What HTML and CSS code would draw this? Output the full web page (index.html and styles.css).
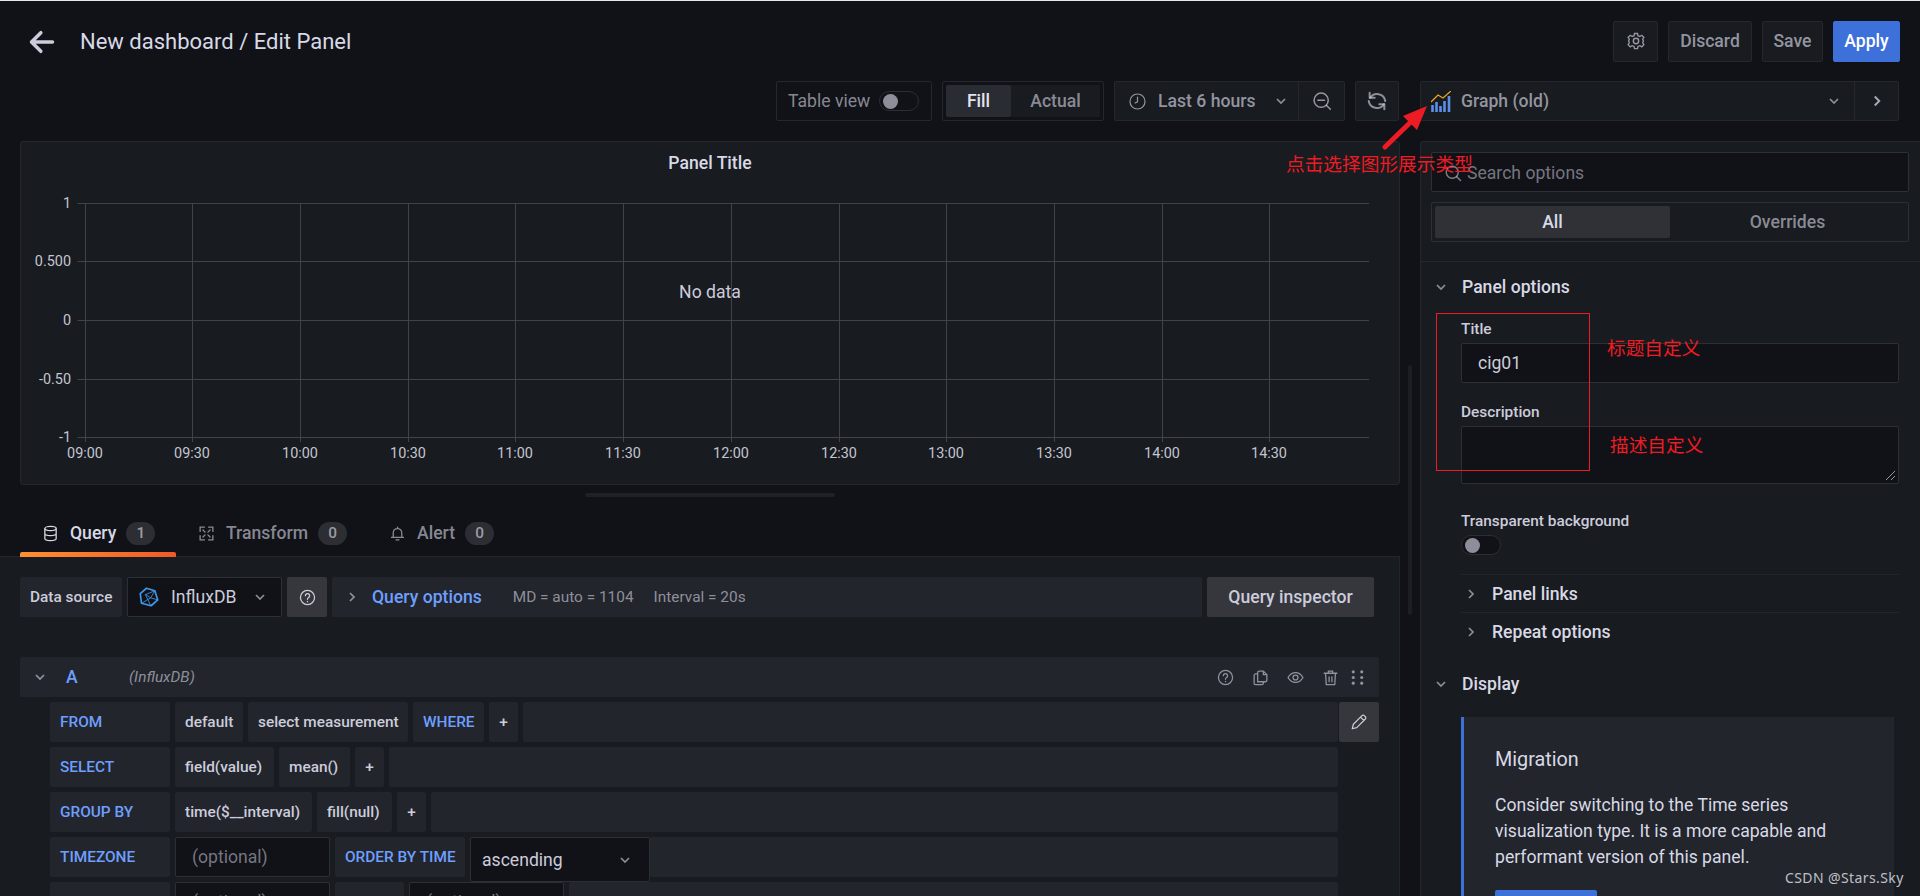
FILE: index.html
```html
<!DOCTYPE html>
<html lang="en">
<head>
<meta charset="utf-8">
<title>Edit Panel</title>
<link rel="stylesheet" href="styles.css">
</head>
<body>
<header class="topbar">
  <svg class="back" viewBox="0 0 24 24"><path d="M21 12H4M11 4l-8 8 8 8" fill="none" stroke="currentColor" stroke-width="3" stroke-linecap="round" stroke-linejoin="round"/></svg>
  <h1 class="crumb">New dashboard / Edit Panel</h1>
  <div class="top-actions">
    <button class="btn icon-btn"><svg class="ic16" viewBox="0 0 24 24"><circle cx="12" cy="12" r="3.2"/><path d="M10 2h4l.6 3 2.5 1 2.6-1.6 2.8 2.8L20.900 9.800l1 2.200 0 .1-1 2.300 1.600 2.600-2.800 2.800-2.600-1.600-2.500 1-.6 3h-4l-.6-3-2.500-1-2.600 1.600-2.800-2.800L3.100 14.300l-1-2.300 1-2.200L1.500 7.200l2.800-2.800 2.600 1.600 2.500-1z" transform="translate(1.200 1.200) scale(.9)"/></svg></button>
    <button class="btn discard">Discard</button>
    <button class="btn save">Save</button>
    <button class="btn apply">Apply</button>
  </div>
</header>

<div class="workspace">
  <main class="left">
    <div class="toolbar">
      <div class="tool-box table-view"><span>Table view</span><span class="switch small"><i></i></span></div>
      <div class="tool-box fill-group"><span class="seg on">Fill</span><span class="seg">Actual</span></div>
      <div class="time-group">
        <div class="time-main">
          <svg class="ic16" viewBox="0 0 24 24"><circle cx="12" cy="12" r="9.500"/><path d="M12 6.500v6l-3 1.500" stroke-linecap="round"/></svg>
          <span class="time-label">Last 6 hours</span>
          <svg class="chev" viewBox="0 0 12 12"><path d="M3 4.500l3 3 3-3"/></svg>
        </div>
        <div class="time-zoom"><svg class="ic18" viewBox="0 0 24 24"><circle cx="11" cy="11" r="8.500"/><path d="M7 11h8M17.200 17.200L22 22" stroke-linecap="round"/></svg></div>
      </div>
      <div class="refresh"><svg class="ic18" viewBox="0 0 24 24"><path d="M4.500 8.500A9 9 0 0 1 21 12M19.500 15.500A9 9 0 0 1 3 12" stroke-linecap="round"/><path d="M4 3v5.500h5.500M20 21v-5.500h-5.500" stroke-linecap="round" stroke-linejoin="round"/></svg></div>
    </div>

    <section class="panel">
      <h2 class="panel-title">Panel Title</h2>
      <svg class="chart" viewBox="0 0 1380 300" width="1380" height="300">
        <g class="grid">
          <path d="M56.500 39.500H1348M56.500 97.500H1348M56.500 156.500H1348M56.500 215.500H1348M56.500 273.500H1348"/>
          <path d="M64.500 39V278M171.500 39V278M279.500 39V278M387.500 39V278M494.500 39V278M602.500 39V278M710.500 39V278M818.500 39V278M925.500 39V278M1033.500 39V278M1141.500 39V278M1248.500 39V278"/>
        </g>
        <g class="y-labels">
          <text x="50" y="44">1</text><text x="50" y="102">0.500</text><text x="50" y="161">0</text><text x="50" y="220">-0.50</text><text x="50" y="278">-1</text>
        </g>
        <g class="x-labels">
          <text x="64" y="294">09:00</text><text x="171" y="294">09:30</text><text x="279" y="294">10:00</text><text x="387" y="294">10:30</text><text x="494" y="294">11:00</text><text x="602" y="294">11:30</text><text x="710" y="294">12:00</text><text x="818" y="294">12:30</text><text x="925" y="294">13:00</text><text x="1033" y="294">13:30</text><text x="1141" y="294">14:00</text><text x="1248" y="294">14:30</text>
        </g>
      </svg>
      <div class="no-data">No data</div>
    </section>
    <div class="splitter"><i></i></div>

    <nav class="tabs">
      <a class="tab active"><svg class="ic16" viewBox="0 0 24 24"><ellipse cx="12" cy="5" rx="8" ry="3"/><path d="M4 5v14c0 1.700 3.600 3 8 3s8-1.300 8-3V5M4 12c0 1.700 3.600 3 8 3s8-1.300 8-3"/></svg><span>Query</span><b class="badge">1</b></a>
      <a class="tab"><svg class="ic16" viewBox="0 0 24 24"><path d="M3 9V3h6M21 9V3h-6M3 15v6h6M21 15v6h-6M7 7l3 3M17 7l-3 3M7 17l3-3M17 17l-3-3" stroke-linecap="round"/></svg><span>Transform</span><b class="badge">0</b></a>
      <a class="tab"><svg class="ic16" viewBox="0 0 24 24"><path d="M6 17V11a6 6 0 0 1 12 0v6M3.500 17.500h17M10 21h4M12 3v2" stroke-linecap="round"/></svg><span>Alert</span><b class="badge">0</b></a>
    </nav>

    <section class="query-pane">
      <div class="ds-row">
        <span class="cell ds-label">Data source</span>
        <div class="ds-select">
          <svg class="influx" viewBox="0 0 24 24"><path class="in-out" d="M9 1.500l10 3 3.500 11-8 7-11.500-3L1.500 8z"/><path class="in-in" d="M8.500 9l-1 0 6.500 13M8 9l11-4.500M14 13l5-8.500M14 13l-11 6.500M8 9l6 4 8.500 2.500"/></svg>
          <span>InfluxDB</span>
          <svg class="chev" viewBox="0 0 12 12"><path d="M3 4.500l3 3 3-3"/></svg>
        </div>
        <div class="ds-help"><svg class="ic16" viewBox="0 0 24 24"><circle cx="12" cy="12" r="10"/><path d="M9 9.500a3 3 0 1 1 4.500 2.600c-1 .6-1.500 1.200-1.500 2.400M12 17.500v.5" stroke-linecap="round"/></svg></div>
        <div class="q-options">
          <svg class="chev side" viewBox="0 0 12 12"><path d="M4.500 3l3 3-3 3"/></svg>
          <span class="q-link">Query options</span>
          <span class="q-meta">MD = auto = 1104</span>
          <span class="q-meta">Interval = 20s</span>
        </div>
        <button class="inspector">Query inspector</button>
      </div>

      <div class="q-head">
        <svg class="chev" viewBox="0 0 12 12"><path d="M3 4.500l3 3 3-3"/></svg>
        <span class="q-letter">A</span>
        <span class="q-ds">(InfluxDB)</span>
        <div class="q-icons">
          <svg class="ic16" viewBox="0 0 24 24"><circle cx="12" cy="12" r="10"/><path d="M9 9.500a3 3 0 1 1 4.500 2.600c-1 .6-1.500 1.200-1.500 2.400M12 17.500v.5" stroke-linecap="round"/></svg>
          <svg class="ic16" viewBox="0 0 24 24"><path d="M8 18V5a2 2 0 0 1 2-2h6l5 5v8a2 2 0 0 1-2 2zM16 3v5h5M8 7H5a2 2 0 0 0-2 2v11a2 2 0 0 0 2 2h9a2 2 0 0 0 2-2v-2"/></svg>
          <svg class="ic16" viewBox="0 0 24 24"><path d="M1.500 12C4 7.500 7.700 5 12 5s8 2.500 10.500 7C20 16.500 16.300 19 12 19s-8-2.500-10.500-7z"/><circle cx="12" cy="12" r="3.500"/></svg>
          <svg class="ic16" viewBox="0 0 24 24"><path d="M3 6h18M9 6V3h6v3M5 6l1 16h12l1-16M10 11v7M14 11v7" stroke-linecap="round"/></svg>
          <svg class="ic16 filled" viewBox="0 0 24 24"><circle cx="6" cy="4" r="2.200"/><circle cx="18" cy="4" r="2.200"/><circle cx="6" cy="12" r="2.200"/><circle cx="18" cy="12" r="2.200"/><circle cx="6" cy="20" r="2.200"/><circle cx="18" cy="20" r="2.200"/></svg>
        </div>
      </div>

      <div class="q-rows">
        <div class="q-row">
          <span class="cell kw label">FROM</span><span class="cell val w68">default</span><span class="cell val w160">select measurement</span><span class="cell kw w71">WHERE</span><span class="cell val plus">+</span><span class="cell fillr"></span>
          <button class="pencil"><svg class="ic16" viewBox="0 0 24 24"><path d="M3 21l1.500-6L16 3.500a2.100 2.100 0 0 1 3 0l1.500 1.500a2.100 2.100 0 0 1 0 3L9 19.500zM14 5.500l4.500 4.500" stroke-linejoin="round"/></svg></button>
        </div>
        <div class="q-row short">
          <span class="cell kw label">SELECT</span><span class="cell val w99">field(value)</span><span class="cell val w71">mean()</span><span class="cell val plus">+</span><span class="cell fillr"></span>
        </div>
        <div class="q-row short">
          <span class="cell kw label">GROUP BY</span><span class="cell val w137">time($__interval)</span><span class="cell val w75">fill(null)</span><span class="cell val plus">+</span><span class="cell fillr"></span>
        </div>
        <div class="q-row short">
          <span class="cell kw label">TIMEZONE</span><span class="input">(optional)</span><span class="cell kw w130">ORDER BY TIME</span>
          <div class="asc"><span>ascending</span><svg class="chev" viewBox="0 0 12 12"><path d="M3 4.500l3 3 3-3"/></svg></div>
          <span class="cell fillr"></span>
        </div>
        <div class="q-row short last">
          <span class="cell kw label">LIMIT</span><span class="input">(optional)</span><span class="cell kw">SLIMIT</span><span class="input">(optional)</span><span class="cell fillr"></span>
        </div>
      </div>
    </section>
  </main>

  <div class="scrollzone"><i></i></div>

  <aside class="right">
    <div class="picker">
      <div class="picker-main">
        <svg class="graph-ic" viewBox="0 0 20 21"><path class="g-line" d="M0 11L7 4l5 3 8-7"/><path class="g-bars" d="M1.500 21v-7M5.500 21v-10M9.500 21v-6M13.500 21v-11M18 21v-16"/></svg>
        <span>Graph (old)</span>
        <svg class="chev" viewBox="0 0 12 12"><path d="M3 4.500l3 3 3-3"/></svg>
      </div>
      <div class="picker-side"><svg class="chev side" viewBox="0 0 12 12"><path d="M4.500 3l3 3-3 3"/></svg></div>
    </div>

    <div class="opts">
      <div class="opts-top">
        <div class="search"><svg class="ic16" viewBox="0 0 24 24"><circle cx="11" cy="11" r="8"/><path d="M17 17l5 5" stroke-linecap="round"/></svg><span>Search options</span></div>
        <div class="opt-tabs"><span class="opt-tab on">All</span><span class="opt-tab">Overrides</span></div>
      </div>
      <div class="opts-body">
        <div class="group-head"><svg class="chev" viewBox="0 0 12 12"><path d="M3 4.500l3 3 3-3"/></svg><span>Panel options</span></div>
        <div class="group">
          <label class="f-label">Title</label>
          <div class="f-input">cig01</div>
          <label class="f-label desc">Description</label>
          <div class="f-area"><svg class="grip" viewBox="0 0 10 10"><path d="M0 9L9 0M5 9L9 5"/></svg></div>
          <label class="f-label trans">Transparent background</label>
          <span class="switch"><i></i></span>
          <div class="sub first"><svg class="chev side" viewBox="0 0 12 12"><path d="M4.500 3l3 3-3 3"/></svg><span>Panel links</span></div>
          <div class="sub"><svg class="chev side" viewBox="0 0 12 12"><path d="M4.500 3l3 3-3 3"/></svg><span>Repeat options</span></div>
        </div>
        <div class="group-head display"><svg class="chev" viewBox="0 0 12 12"><path d="M3 4.500l3 3 3-3"/></svg><span>Display</span></div>
        <div class="notice">
          <h3>Migration</h3>
          <p>Consider switching to the Time series visualization type. It is a more capable and performant version of this panel.</p>
          <div class="notice-btn"></div>
        </div>
      </div>
    </div>
  </aside>
</div>

<div class="note n1">点击选择图形展示类型</div>
<div class="note n2">标题自定义</div>
<div class="note n3">描述自定义</div>
<div class="redbox"></div>
<svg class="arrow" viewBox="0 0 50 50" width="50" height="50"><path d="M3 45L38 11" stroke="#ed1c24" stroke-width="5" stroke-linecap="round"/><path d="M45 4L21 14l14 14z" fill="#ed1c24" stroke="none"/></svg>
<div class="watermark">CSDN @Stars.Sky</div>
</body>
</html>
```
FILE: styles.css
```css
* { box-sizing: border-box; }
html, body { margin: 0; height: 896px; overflow: hidden; }
body {
  position: relative;
  width: 1920px;
  background: #111217;
  border-top: 1px solid #e8e8e8;
  color: #ccccdc;
  font-family: Roboto, "Noto Sans CJK SC", sans-serif;
  font-size: 17.6px;
}
svg { display: block; flex: none; fill: none; stroke: currentColor; }
.ic16 { width: 17px; height: 17px; stroke-width: 1.800; }
.ic18 { width: 18px; height: 18px; stroke-width: 1.800; }
.filled { fill: currentColor; stroke: none; }
.chev { width: 16px; height: 16px; stroke-width: 1.300; color: rgba(204,204,220,.65); }
button { font: inherit; color: inherit; }

/* header */
.topbar { display: flex; align-items: center; height: 80px; padding: 0 20px 0 28px; }
.back { width: 28px; height: 28px; color: #ccccdc; margin-top: 1px; }
.crumb { margin: 0 0 0 24px; font-size: 22px; font-weight: 400; color: #d8d9e6; }
.top-actions { margin-left: auto; display: flex; gap: 10px; }
.btn {
  height: 41px;
  border: 1px solid #25272d;
  border-radius: 2px;
  background: #181b1f;
  color: rgba(204,204,220,.7);
  font-weight: 500;
  font-size: 17.6px;
  padding: 0;
  display: flex;
  align-items: center;
  justify-content: center;
}
.icon-btn { width: 45px; }
.icon-btn svg { width: 20px; height: 20px; }
.discard { width: 84px; }
.save { width: 61px; }
.apply { width: 67px; background: #3d71d9; border-color: #3d71d9; color: #fff; }

/* layout */
.workspace { display: flex; height: 815px; }
.left { width: 1400px; flex: none; }
.scrollzone { width: 20px; flex: none; padding: 284px 0 0 8px; }
.scrollzone i { display: block; width: 4px; height: 250px; background: #1b1e22; border-radius: 2px; }
.right { flex: 1; min-width: 0; }

/* toolbar */
.toolbar { display: flex; justify-content: flex-end; height: 40px; gap: 10px; }
.tool-box { display: flex; align-items: center; height: 40px; border: 1px solid #25272d; border-radius: 2px; }
.table-view { width: 156px; padding-left: 11px; gap: 9px; color: rgba(204,204,220,.65); white-space: nowrap; }
.fill-group { width: 162px; padding: 3px; background: #111217; }
.seg { height: 32px; display: flex; align-items: center; justify-content: center; flex: 1; background: #181b1f; color: rgba(204,204,220,.65); font-weight: 500; }
.seg.on { flex: none; width: 65px; background: #2a2c33; color: #e2e3ee; border-radius: 2px; font-weight: 500; }
.switch { display: block; flex: none; width: 40px; height: 20px; border: 1px solid #2b2e34; border-radius: 10px; padding: 2px 3px; background: #111217; }
.switch i { display: block; width: 15px; height: 15px; border-radius: 50%; background: #8e8e9b; }
.time-group { display: flex; width: 231px; height: 40px; background: #181b1f; border: 1px solid #25272d; border-radius: 2px; color: rgba(204,204,220,.7); }
.time-main { flex: 1; display: flex; align-items: center; padding-left: 13px; border-right: 1px solid #25272d; font-weight: 500; white-space: nowrap; }
.time-main .ic16 { width: 19px; height: 19px; stroke-width: 1.500; }
.time-label { margin-left: 11px; }
.time-main .chev { margin-left: 18px; }
.time-zoom { width: 45px; display: flex; align-items: center; justify-content: center; }
.time-zoom svg { width: 20px; height: 20px; }
.refresh { width: 44px; margin-right: 1px; height: 40px; display: flex; align-items: center; justify-content: center; background: #181b1f; border: 1px solid #25272d; border-radius: 2px; color: rgba(204,204,220,.65); }
.refresh svg { width: 22px; height: 22px; stroke-width: 2.200; }

/* panel */
.panel { position: relative; margin: 20px 0 0 20px; width: 1380px; height: 344px; background: #181b1f; border: 1px solid #25272d; border-radius: 3px; }
.panel-title { margin: 0; height: 46px; text-align: center; line-height: 42px; font-size: 17.6px; font-weight: 500; color: #d8d9e6; }
.chart { position: absolute; left: 0; top: 22px; }
.grid path { stroke: #404347; stroke-width: 1; }
.chart text { fill: #c4c5d2; stroke: none; font-size: 14.4px; font-family: Roboto, sans-serif; }
.y-labels text { text-anchor: end; }
.x-labels text { text-anchor: middle; }
.no-data { position: absolute; left: 0; right: 0; top: 140px; text-align: center; font-size: 17.6px; color: #ccccdc; }
.splitter { height: 28px; padding-top: 8px; }
.splitter i { display: block; margin-left: 585px; width: 250px; height: 4px; border-radius: 2px; background: #1e2126; }

/* tabs */
.tabs { display: flex; height: 44px; padding-left: 20px; border-bottom: 1px solid #22252b; color: rgba(204,204,220,.65); }
.tab { position: relative; display: flex; align-items: flex-start; padding: 7px 0 0; height: 44px; font-weight: 500; white-space: nowrap; }
.tab:nth-child(2) { width: 191px; }
.tab.active { width: 156px; margin-right: 22px; padding-left: 22px; color: #d8d9e6; }
.tab svg { margin-top: 5px; }
.tab span { margin-left: 11px; line-height: 26px; }
.tab.active::after { content: ""; position: absolute; left: 0; right: 0; bottom: 0; height: 5px; border-radius: 2px 2px 0 0; background: linear-gradient(90deg, #ff9030, #f05a28); }
.badge { margin: 2px 0 0 10px; width: 29px; height: 23px; border-radius: 12px; background: #2c2e33; color: rgba(204,204,220,.7); font-size: 15.4px; font-weight: 500; text-align: center; line-height: 23px; }

/* query */
.query-pane { height: 340px; background: #181b1f; padding: 20px 20px 0 20px; overflow: hidden; border-right: 1px solid #22252b; }
.ds-row { display: flex; height: 40px; gap: 5px; }
.cell { display: flex; align-items: center; height: 40px; padding: 0 10px; background: #22252b; border-radius: 2px; font-size: 15.4px; font-weight: 500; white-space: nowrap; }
.ds-label { width: 102px; color: #ccccdc; }
.ds-select { width: 155px; display: flex; align-items: center; padding-left: 11px; background: #111217; border: 1px solid #2c2f35; border-radius: 2px; color: #ccccdc; }
.influx { width: 20px; height: 20px; color: #3f98e8; }
.in-out { stroke-width: 2; stroke-linejoin: round; }
.in-in { stroke-width: 1; }
.ds-select span { margin-left: 12px; }
.ds-select .chev { margin-left: 16px; }
.ds-help { width: 40px; display: flex; align-items: center; justify-content: center; background: #35373c; border-radius: 2px; color: #ccccdc; }
.q-options { flex: 1; display: flex; align-items: center; background: #22252b; border-radius: 2px; padding-left: 12px; }
.q-link { margin-left: 12px; color: #6e9fff; font-weight: 500; }
.q-meta { margin-left: 31px; color: rgba(204,204,220,.65); font-size: 15.4px; }
.q-meta + .q-meta { margin-left: 20px; }
.inspector { width: 167px; height: 40px; margin-right: 5px; border: 0; background: #35373c; border-radius: 2px; color: #ccccdc; font-weight: 500; }
.q-head { display: flex; align-items: center; height: 40px; margin: 40px 0 0; padding-left: 12px; background: #22252b; border-radius: 2px; color: rgba(204,204,220,.65); }
.q-letter { margin-left: 18px; width: 63px; color: #6e9fff; font-weight: 500; }
.q-ds { font-style: italic; font-size: 15.4px; }
.q-icons { margin-left: auto; display: flex; align-items: center; gap: 18px; padding-right: 13px; }
.q-icons .filled { margin-left: -8px; }
.q-rows { margin-top: 5px; padding-left: 30px; }
.q-row { display: flex; gap: 5px; height: 40px; margin-bottom: 5px; color: #ccccdc; }
.q-row.short { padding-right: 41px; }
.kw { color: #6e9fff; }
.label { width: 120px; flex: none; }
.val { color: #ccccdc; }
.plus { width: 29px; justify-content: center; padding: 0; }
.fillr { flex: 1; min-width: 0; padding: 0; }
.w68 { width: 68px; flex: none; }
.w71 { width: 71px; flex: none; }
.w75 { width: 75px; flex: none; }
.w99 { width: 99px; flex: none; }
.w130 { width: 130px; flex: none; }
.w137 { width: 137px; flex: none; }
.w160 { width: 160px; flex: none; }
.pencil { width: 40px; height: 40px; margin-left: -4px; border: 0; padding: 0; background: #35373c; border-radius: 2px; color: #ccccdc; display: flex; align-items: center; justify-content: center; }
.pencil svg { width: 18px; height: 18px; stroke-width: 1.600; }
.input { display: flex; align-items: center; width: 155px; height: 40px; padding-left: 16px; background: #111217; border: 1px solid #2c2f35; border-radius: 2px; color: rgba(204,204,220,.55); flex: none; }
.asc { display: flex; align-items: center; width: 180px; height: 45px; margin-right: -5px; padding: 0 16px 0 11px; justify-content: space-between; background: #111217; border: 1px solid #2c2f35; border-radius: 2px; flex: none; }

/* right */
.picker { display: flex; width: 479px; height: 40px; background: #181b1f; border: 1px solid #25272d; border-radius: 2px; color: rgba(204,204,220,.7); font-weight: 500; }
.picker-main { flex: 1; display: flex; align-items: center; padding-left: 10px; border-right: 1px solid #25272d; }
.graph-ic { width: 20px; height: 21px; }
.g-line { stroke: #e5a52b; stroke-width: 1.300; }
.g-bars { stroke: #5a90e8; stroke-width: 2.600; }
.picker-main span { margin-left: 10px; }
.picker-main .chev { margin-left: auto; margin-right: 12px; }
.picker-side { width: 43px; display: flex; align-items: center; justify-content: center; }
.picker-side svg { color: rgba(204,204,220,.8); width: 18px; height: 18px; }
.opts { margin-top: 20px; height: 760px; background: #181b1f; border: 1px solid #25272d; border-right: 0; border-radius: 3px 0 0 0; }
.opts-top { height: 120px; padding: 10px 11px 0 10px; border-bottom: 1px solid #25272d; }
.search { display: flex; align-items: center; height: 40px; padding: 1px 0 0 12px; background: #111217; border: 1px solid #2c2f35; border-radius: 2px; color: rgba(204,204,220,.55); }
.search span { margin-left: 5px; }
.search svg { width: 18px; height: 18px; color: rgba(204,204,220,.6); }
.opt-tabs { display: flex; margin-top: 10px; height: 40px; padding: 3px; border: 1px solid #2c2f35; border-radius: 2px; }
.opt-tab { flex: 1; display: flex; align-items: center; justify-content: center; color: rgba(204,204,220,.65); font-weight: 500; }
.opt-tab.on { flex: none; width: 235px; background: #2f3136; color: #d8d9e6; border-radius: 2px; }
.opts-body { padding: 0 20px 0 0; }
.group-head { display: flex; align-items: center; height: 48px; padding: 2px 0 0 12px; font-weight: 500; color: #d8d9e6; }
.group-head span { margin-left: 13px; }
.group { margin-left: 40px; padding-top: 10px; }
.f-label { display: block; height: 23px; line-height: 19px; font-size: 15.4px; font-weight: 500; color: #ccccdc; }
.f-label.desc { margin-top: 20px; }
.f-label.trans { margin-top: 25px; height: 26px; line-height: 24px; }
.f-input { display: flex; align-items: center; width: 438px; height: 40px; padding-left: 16px; background: #111217; border: 1px solid #2c2f35; border-radius: 2px; color: #ccccdc; }
.f-area { position: relative; width: 438px; height: 58px; background: #111217; border: 1px solid #2c2f35; border-radius: 2px; }
.grip { position: absolute; right: 2px; bottom: 2px; width: 10px; height: 10px; stroke: #999; stroke-width: 1; }
.sub { display: flex; align-items: center; width: 438px; height: 38px; padding-left: 2px; font-weight: 500; color: #d8d9e6; border-top: 1px solid #22252b; }
.sub.first { margin-top: 19px; }
.sub span { margin-left: 13px; }
.display { margin-top: 9px; }
.notice { margin: 10px 0 0 40px; width: 433px; height: 200px; padding: 29px 30px 0 31px; background: #22252b; border-left: 3px solid #3d71d9; color: #d8d9e6; }
.notice h3 { margin: 0; font-size: 19.8px; font-weight: 400; line-height: 28px; }
.notice p { margin: 18px 0 0; font-size: 17.6px; line-height: 26px; }
.notice-btn { width: 102px; height: 30px; margin-top: 20px; background: #3d71d9; border-radius: 2px; }

/* annotations over the screenshot */
.note { position: absolute; color: #ed1c24; font-size: 18.700px; line-height: 24px; white-space: nowrap; font-family: "Noto Sans CJK SC", sans-serif; font-weight: 400; }
.n1 { left: 1286px; top: 150px; }
.n2 { left: 1607px; top: 334px; }
.n3 { left: 1610px; top: 431px; }
.redbox { position: absolute; left: 1436px; top: 312px; width: 154px; height: 158px; border: 1px solid #ed1c24; }
.arrow { position: absolute; left: 1382px; top: 101px; }
.watermark { position: absolute; left: 1785px; top: 868px; font-size: 14px; line-height: 18px; letter-spacing: .4px; color: #bfc0c8; font-family: "Noto Sans", sans-serif; }
```
